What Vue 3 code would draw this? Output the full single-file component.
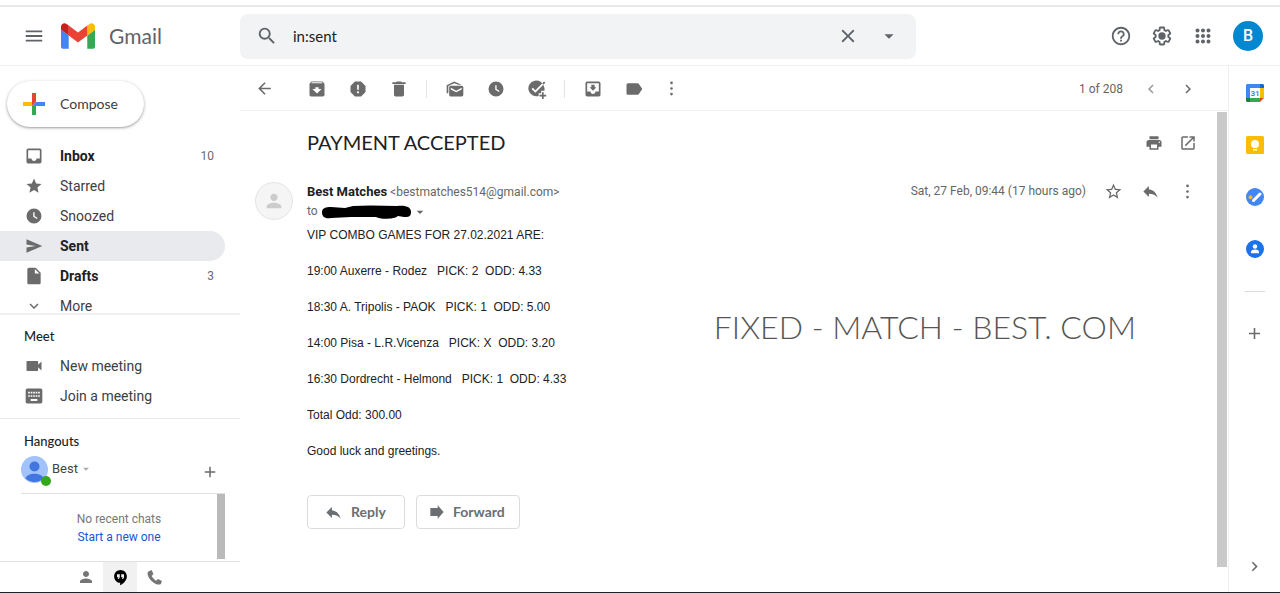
<script setup>
import { h, ref } from 'vue'

const paths = {
  menu: 'M3 18h18v-2H3v2zm0-5h18v-2H3v2zm0-7v2h18V6H3z',
  search: 'M15.5 14h-.79l-.28-.27A6.47 6.47 0 0 0 16 9.5 6.5 6.5 0 1 0 9.5 16c1.61 0 3.09-.59 4.23-1.57l.27.28v.79l5 4.99L20.49 19l-4.99-5zm-6 0C7.01 14 5 11.99 5 9.5S7.01 5 9.5 5 14 7.01 14 9.5 11.99 14 9.5 14z',
  close: 'M19 6.41L17.59 5 12 10.59 6.41 5 5 6.41 10.59 12 5 17.59 6.41 19 12 13.41 17.59 19 19 17.59 13.41 12z',
  caret: 'M7 10l5 5 5-5z',
  help: 'M11 18h2v-2h-2v2zm1-16C6.48 2 2 6.48 2 12s4.48 10 10 10 10-4.48 10-10S17.52 2 12 2zm0 18c-4.41 0-8-3.59-8-8s3.59-8 8-8 8 3.59 8 8-3.59 8-8 8zm0-14c-2.21 0-4 1.79-4 4h2c0-1.1.9-2 2-2s2 .9 2 2c0 2-3 1.75-3 5h2c0-2.25 3-2.5 3-5 0-2.21-1.79-4-4-4z',
  settings: 'M13.85 22.25h-3.7c-.74 0-1.36-.54-1.45-1.27l-.27-1.89c-.27-.14-.53-.29-.79-.46l-1.8.72c-.7.26-1.47-.03-1.81-.65L2.2 15.53c-.35-.66-.2-1.44.36-1.88l1.53-1.19c-.01-.15-.02-.3-.02-.46 0-.15.01-.31.02-.46l-1.52-1.19c-.59-.45-.74-1.26-.37-1.88l1.85-3.19c.34-.62 1.11-.9 1.79-.63l1.81.73c.26-.17.52-.32.78-.46l.27-1.91c.09-.7.71-1.25 1.44-1.25h3.7c.74 0 1.36.54 1.45 1.27l.27 1.89c.27.14.53.29.79.46l1.8-.72c.71-.26 1.48.03 1.82.65l1.84 3.18c.36.66.2 1.44-.36 1.88l-1.52 1.19c.01.15.02.3.02.46s-.01.31-.02.46l1.52 1.19c.56.45.72 1.23.37 1.86l-1.86 3.22c-.34.62-1.11.9-1.8.63l-1.8-.72c-.26.17-.52.32-.78.46l-.27 1.91c-.1.68-.72 1.22-1.46 1.22zm-3.23-2h2.76l.37-2.55.53-.22c.44-.18.88-.44 1.34-.78l.45-.34 2.38.96 1.38-2.4-2.03-1.58.07-.56c.03-.26.06-.51.06-.78s-.03-.53-.06-.78l-.07-.56 2.03-1.58-1.39-2.4-2.39.96-.45-.35c-.42-.32-.87-.58-1.33-.77l-.52-.22-.37-2.55h-2.76l-.37 2.55-.53.21c-.44.19-.88.44-1.34.79l-.45.33-2.38-.95-1.39 2.39 2.03 1.58-.07.56a7 7 0 0 0-.06.79c0 .26.02.53.06.78l.07.56-2.03 1.58 1.38 2.4 2.39-.96.45.35c.43.33.86.58 1.33.77l.53.22.38 2.55zM12 8a4 4 0 1 0 0 8 4 4 0 0 0 0-8z',
  apps: 'M6 3.8a2.2 2.2 0 1 0 0 4.4 2.2 2.2 0 0 0 0-4.4zm6 0a2.2 2.2 0 1 0 0 4.4 2.2 2.2 0 0 0 0-4.4zm6 0a2.2 2.2 0 1 0 0 4.4 2.2 2.2 0 0 0 0-4.4zM6 9.8a2.2 2.2 0 1 0 0 4.4 2.2 2.2 0 0 0 0-4.4zm6 0a2.2 2.2 0 1 0 0 4.4 2.2 2.2 0 0 0 0-4.4zm6 0a2.2 2.2 0 1 0 0 4.4 2.2 2.2 0 0 0 0-4.4zM6 15.8a2.2 2.2 0 1 0 0 4.4 2.2 2.2 0 0 0 0-4.4zm6 0a2.2 2.2 0 1 0 0 4.4 2.2 2.2 0 0 0 0-4.4zm6 0a2.2 2.2 0 1 0 0 4.4 2.2 2.2 0 0 0 0-4.4z',
  inbox: 'M19 3H5c-1.1 0-2 .9-2 2v14c0 1.1.9 2 2 2h14c1.1 0 2-.9 2-2V5c0-1.1-.9-2-2-2zm0 12h-4c0 1.66-1.35 3-3 3s-3-1.34-3-3H5V5h14v10z',
  star: 'M12 17.27L18.18 21l-1.64-7.03L22 9.24l-7.19-.61L12 2 9.19 8.63 2 9.24l5.46 4.73L5.82 21z',
  starOutline: 'M22 9.24l-7.19-.62L12 2 9.19 8.63 2 9.24l5.46 4.73L5.82 21 12 17.27 18.18 21l-1.63-7.03L22 9.24zM12 15.4l-3.76 2.27 1-4.28-3.32-2.88 4.38-.38L12 6.1l1.71 4.04 4.38.38-3.32 2.88 1 4.28L12 15.4z',
  clock: 'M12 2a10 10 0 1 0 0 20 10 10 0 0 0 0-20zm3.9 14L11 13V7h1.8v5l4 2.5-.9 1.5z',
  send: 'M2 21l21-9L2 3v7l12 2-12 2z',
  file: 'M6 2c-1.1 0-2 .9-2 2v16c0 1.1.9 2 2 2h12c1.1 0 2-.9 2-2V8l-6-6H6zm7 7V3.500L18.500 9H13z',
  down: 'M16.59 8.59L12 13.17 7.41 8.59 6 10l6 6 6-6z',
  left: 'M15.41 7.41L14 6l-6 6 6 6 1.41-1.41L10.83 12z',
  right: 'M10 6L8.590 7.410 13.170 12l-4.580 4.590L10 18l6-6z',
  video: 'M17 10.500V7c0-.55-.45-1-1-1H4c-.55 0-1 .45-1 1v10c0 .55.45 1 1 1h12c.55 0 1-.45 1-1v-3.500l4 4v-11l-4 4z',
  keyboard: 'M20 3H4a2 2 0 0 0-2 2v14c0 1.100.9 2 2 2h16a2 2 0 0 0 2-2V5a2 2 0 0 0-2-2zm-9 4h2v2h-2V7zm0 4h2v2h-2v-2zM8 7h2v2H8V7zm0 4h2v2H8v-2zm-1 2H5v-2h2v2zm0-4H5V7h2v2zm9 9H8v-2.500h8V18zm0-5h-2v-2h2v2zm0-4h-2V7h2v2zm3 4h-2v-2h2v2zm0-4h-2V7h2v2z',
  plus: 'M19 13h-6v6h-2v-6H5v-2h6V5h2v6h6v2z',
  back: 'M20 11H7.830l5.590-5.590L12 4l-8 8 8 8 1.410-1.410L7.830 13H20v-2z',
  archive: 'M20.540 5.230l-1.390-1.680C18.880 3.210 18.470 3 18 3H6c-.47 0-.88.21-1.160.55L3.460 5.230C3.170 5.570 3 6.020 3 6.500V19c0 1.100.9 2 2 2h14c1.100 0 2-.9 2-2V6.500c0-.48-.17-.93-.46-1.270zM12 17.500L6.500 12H10v-2h4v2h3.500L12 17.500zM5.120 5l.81-1h12l.94 1H5.120z',
  report: 'M15.730 3H8.270L3 8.270v7.460L8.270 21h7.460L21 15.730V8.270L15.730 3zM12 17.300c-.72 0-1.300-.58-1.300-1.300s.58-1.300 1.300-1.300 1.300.58 1.300 1.300-.58 1.300-1.300 1.300zm1-4.300h-2V7h2v6z',
  trash: 'M6 19c0 1.100.9 2 2 2h8c1.100 0 2-.9 2-2V7H6v12zM20 4h-4.500l-1-1h-5l-1 1H4v2h16V4z',
  unread: 'M20 8H7a2 2 0 0 0-2 2v9a2 2 0 0 0 2 2h13a2 2 0 0 0 2-2v-9a2 2 0 0 0-2-2zm0 4.500L13.500 16 7 12.500v-2l6.500 3.500 6.500-3.500v2zM2 17V7.500L11 3l9 4h-4l-5-2-7 3.500V17H2z',
  task: 'M20.500 9.500A9.500 9.500 0 1 0 14 20.300V17h3v-3h4v-3zM10 16.500l-4.500-4.500L7 10.500l3 3L20.500 3 22 4.500zM18 16h2v3h3v2h-3v3h-2v-3h-3v-2h3z',
  move: 'M19 3H5c-1.100 0-2 .9-2 2v14c0 1.100.9 2 2 2h14c1.100 0 2-.9 2-2V5c0-1.100-.9-2-2-2zm0 12h-4c0 1.660-1.350 3-3 3s-3-1.340-3-3H5V5h14v10zm-3-5h-2V7h-4v3H8l4 4 4-4z',
  label: 'M17.630 5.840C17.270 5.330 16.670 5 16 5L5 5.010C3.900 5.010 3 5.900 3 7v10c0 1.100.9 1.990 2 1.990L16 19c.67 0 1.270-.33 1.630-.84L22 12l-4.370-6.160z',
  more: 'M12 3.300a1.700 1.700 0 1 0 0 3.400 1.700 1.700 0 0 0 0-3.400zm0 7a1.700 1.700 0 1 0 0 3.400 1.700 1.700 0 0 0 0-3.400zm0 7a1.700 1.700 0 1 0 0 3.400 1.700 1.700 0 0 0 0-3.400z',
  print: 'M19 8H5c-1.660 0-3 1.340-3 3v6h4v4h12v-4h4v-6c0-1.660-1.340-3-3-3zm-3 11H8v-5h8v5zm3-7c-.55 0-1-.45-1-1s.45-1 1-1 1 .45 1 1-.45 1-1 1zm-1-9H6v4h12V3z',
  open: 'M19 19H5V5h7V3H5a2 2 0 0 0-2 2v14a2 2 0 0 0 2 2h14c1.100 0 2-.9 2-2v-7h-2v7zM14 3v2h3.590l-9.830 9.830 1.410 1.410L19 6.410V10h2V3h-7z',
  reply: 'M10 9V5l-7 7 7 7v-4.100c5 0 8.500 1.600 11 5.100-1-5-4-10-11-11z',
  forward: 'M2 6h11V2l9 10-9 10v-4H2z',
  person: 'M12 12c2.210 0 4-1.790 4-4s-1.790-4-4-4-4 1.790-4 4 1.790 4 4 4zm0 2c-2.670 0-8 1.340-8 4v2h16v-2c0-2.660-5.330-4-8-4z',
  hangouts: 'M12 1.500c-5 0-9 4-9 9s4 9 8.500 9V23c4.500-2.200 9.500-7 9.500-12.500 0-5-4-9-9-9zM11 11.500L9.700 14H8l1.300-2.500H7v-4h4v4zm6 0L15.700 14H14l1.300-2.500H13v-4h4v4z',
  phone: 'M8 1.500L3.500 3.500C1 5 2 11 7.500 16.500S19 23 21 21l1.500-4-5.500-3-3 2.500C12 15 9 12 8 10l2.500-3z',
}

const Icon = ({ name, size = 20 }) =>
  h('svg', { viewBox: '0 0 24 24', width: size, height: size, fill: 'currentColor', 'aria-hidden': 'true' }, [
    h('path', { d: paths[name], 'fill-rule': 'evenodd' }),
  ])
Icon.props = ['name', 'size']

const query = ref('in:sent')

const folders = [
  { label: 'Inbox', icon: 'inbox', count: 10, bold: true },
  { label: 'Starred', icon: 'star', size: 18 },
  { label: 'Snoozed', icon: 'clock', size: 18 },
  { label: 'Sent', icon: 'send', bold: true, active: true, size: 18 },
  { label: 'Drafts', icon: 'file', count: 3, bold: true },
  { label: 'More', icon: 'down', size: 18 },
]

const tools = [
  [
    { label: 'Archive', icon: 'archive' },
    { label: 'Report spam', icon: 'report' },
    { label: 'Delete', icon: 'trash' },
  ],
  [
    { label: 'Mark as unread', icon: 'unread' },
    { label: 'Snooze', icon: 'clock', size: 18 },
    { label: 'Add to tasks', icon: 'task' },
  ],
  [
    { label: 'Move to', icon: 'move' },
    { label: 'Labels', icon: 'label' },
  ],
]

const lines = [
  'VIP COMBO GAMES FOR 27.02.2021 ARE:',
  '19:00 Auxerre - Rodez   PICK: 2  ODD: 4.33',
  '18:30 A. Tripolis - PAOK   PICK: 1  ODD: 5.00',
  '14:00 Pisa - L.R.Vicenza   PICK: X  ODD: 3.20',
  '16:30 Dordrecht - Helmond   PICK: 1  ODD: 4.33',
  'Total Odd: 300.00',
  'Good luck and greetings.',
]
</script>

<template>
  <div class="app">
    <header class="top">
      <div class="brand">
        <button class="ib menu" aria-label="Main menu"><Icon name="menu" :size="22" /></button>
        <a class="logo" href="#">
          <svg viewBox="52 42 88 66" width="34" height="26" aria-hidden="true">
            <path fill="#4285f4" d="M58 108h14V74L52 59v43c0 3.320 2.690 6 6 6" />
            <path fill="#34a853" d="M120 108h14c3.320 0 6-2.690 6-6V59l-20 15" />
            <path fill="#fbbc04" d="M120 48v26l20-15v-8c0-7.420-8.470-11.650-14.400-7.200" />
            <path fill="#ea4335" d="M72 74V48l24 18 24-18v26L96 92" />
            <path fill="#c5221f" d="M52 51v8l20 15V48l-5.600-4.200c-5.940-4.450-14.400-.22-14.400 7.200" />
          </svg>
          <span>Gmail</span>
        </a>
      </div>
      <form class="search" role="search" @submit.prevent>
        <button class="ib" aria-label="Search"><Icon name="search" :size="22" /></button>
        <input v-model="query" type="text" aria-label="Search mail" />
        <button class="ib" type="button" aria-label="Clear search"><Icon name="close" :size="22" /></button>
        <button class="ib" type="button" aria-label="Search options"><Icon name="caret" :size="22" /></button>
      </form>
      <div class="account">
        <button class="ib" aria-label="Support"><Icon name="help" :size="22" /></button>
        <button class="ib" aria-label="Settings"><Icon name="settings" :size="22" /></button>
        <button class="ib" aria-label="Apps"><Icon name="apps" :size="22" /></button>
        <button class="avatar" aria-label="Account">B</button>
      </div>
    </header>

    <div class="columns">
      <aside class="side">
        <button class="compose">
          <svg viewBox="0 0 24 24" width="24" height="24" aria-hidden="true">
            <path fill="#ea4335" d="M10 1h4v9l-4 4z" />
            <path fill="#4285f4" d="M14 10h9v4H10z" />
            <path fill="#34a853" d="M10 14h4v9h-4z" />
            <path fill="#fbbc04" d="M1 10h9v4H1z" />
          </svg>
          Compose
        </button>
        <nav class="folders" aria-label="Folders">
          <a v-for="f in folders" :key="f.label" href="#" class="row" :class="{ bold: f.bold, active: f.active }">
            <span class="glyph"><Icon :name="f.icon" :size="f.size || 20" /></span>
            <span class="name">{{ f.label }}</span>
            <span v-if="f.count" class="count">{{ f.count }}</span>
          </a>
        </nav>
        <section class="meet">
          <h2>Meet</h2>
          <a href="#" class="row"><span class="glyph"><Icon name="video" :size="20" /></span><span class="name">New meeting</span></a>
          <a href="#" class="row"><span class="glyph"><Icon name="keyboard" :size="20" /></span><span class="name">Join a meeting</span></a>
        </section>
        <section class="hangouts">
          <h2>Hangouts</h2>
          <div class="me">
            <span class="face">
              <svg viewBox="0 0 27 27" width="27" height="27" aria-hidden="true">
                <circle cx="13.500" cy="13.500" r="13.500" fill="#a1c2fa" />
                <circle cx="13.500" cy="10.500" r="5" fill="#4175df" />
                <path d="M4.500 22.500c1-6.500 17-6.500 18 0a13.500 13.500 0 0 1-18 0z" fill="#4175df" />
              </svg>
              <i class="online"></i>
            </span>
            <button class="who">Best <Icon name="caret" :size="14" /></button>
            <button class="ib add" aria-label="New conversation"><Icon name="plus" :size="18" /></button>
          </div>
          <div class="chats">
            <p>No recent chats<br /><a href="#">Start a new one</a></p>
            <i class="thumb"></i>
          </div>
        </section>
        <div class="tabs">
          <button aria-label="Contacts"><Icon name="person" :size="18" /></button>
          <button class="on" aria-label="Hangouts"><Icon name="hangouts" :size="17" /></button>
          <button aria-label="Phone"><Icon name="phone" :size="17" /></button>
        </div>
      </aside>

      <main class="mail">
        <div class="toolbar">
          <button class="ib back" aria-label="Back to Sent"><Icon name="back" :size="19" /></button>
          <div v-for="(group, i) in tools" :key="i" class="group">
            <button v-for="t in group" :key="t.label" class="ib" :aria-label="t.label"><Icon :name="t.icon" :size="t.size || 20" /></button>
          </div>
          <button class="ib narrow" aria-label="More"><Icon name="more" :size="19" /></button>
          <span class="pos">1 of 208</span>
          <button class="ib slim faint" aria-label="Newer"><Icon name="left" :size="18" /></button>
          <button class="ib slim" aria-label="Older"><Icon name="right" :size="18" /></button>
        </div>

        <div class="viewport">
          <article>
            <div class="subject">
              <h1>PAYMENT ACCEPTED</h1>
              <button class="ib tight" aria-label="Print"><Icon name="print" :size="18" /></button>
              <button class="ib slim" aria-label="Open in new window"><Icon name="open" :size="18" /></button>
            </div>
            <div class="from">
              <span class="photo"><Icon name="person" :size="22" /></span>
              <div class="names">
                <p><strong>Best Matches</strong> <span>&lt;bestmatches514@gmail.com&gt;</span></p>
                <p class="to">
                  to
                  <svg class="ink" viewBox="0 0 91 14" width="91" height="14" aria-hidden="true">
                    <path d="M1 7C1 3 5 2 10 2l14 1 8-2 18-.500 26 .500c9-1 14 1 14 6 0 5-3 5-7 5l-6-1c-3 3-17 4-22 1L30 12l-20 1C4 14 1 12 1 7z" />
                  </svg>
                  <button class="details" aria-label="Show details"><Icon name="caret" :size="16" /></button>
                </p>
              </div>
              <div class="meta">
                <time>Sat, 27 Feb, 09:44 (17 hours ago)</time>
                <button class="ib slim" aria-label="Star"><Icon name="starOutline" :size="19" /></button>
                <button class="ib slim" aria-label="Reply"><Icon name="reply" :size="19" /></button>
                <button class="ib slim" aria-label="More"><Icon name="more" :size="19" /></button>
              </div>
            </div>
            <div class="content">
              <div class="text"><p v-for="l in lines" :key="l">{{ l }}</p></div>
              <div class="banner">FIXED - MATCH - BEST. COM</div>
            </div>
            <div class="actions">
              <button><Icon name="reply" :size="19" />Reply</button>
              <button><Icon name="forward" :size="16" />Forward</button>
            </div>
          </article>
          <div class="rail"><i></i></div>
        </div>
      </main>

      <aside class="addons">
        <button class="addon" aria-label="Calendar">
          <svg viewBox="0 0 18 18" width="18" height="18" aria-hidden="true">
            <path fill="#4285f4" d="M1 0h13v4H4v10H0V1z" />
            <path fill="#1967d2" d="M14 0h3l1 1v3h-4z" />
            <path fill="#fbbc04" d="M14 4h4v10h-4z" />
            <path fill="#34a853" d="M4 14h10v4H4z" />
            <path fill="#188038" d="M0 14h4v4H1l-1-1z" />
            <path fill="#ea4335" d="M14 14h4l-4 4z" />
            <path fill="#fff" d="M4 4h10v10H4z" />
            <text x="9" y="12" text-anchor="middle" font-size="8" font-weight="700" fill="#4285f4">31</text>
          </svg>
        </button>
        <button class="addon" aria-label="Keep">
          <svg viewBox="0 0 18 18" width="18" height="18" aria-hidden="true">
            <rect width="18" height="18" rx="1.500" fill="#fbbc04" />
            <circle cx="9" cy="8" r="4" fill="#fff" />
            <path d="M7 10h4v2H7zM7 13h4v1.500H7z" fill="#fff" />
          </svg>
        </button>
        <button class="addon" aria-label="Tasks">
          <svg viewBox="0 0 18 18" width="18" height="18" aria-hidden="true">
            <circle cx="9" cy="9" r="9" fill="#4285f4" />
            <path d="M7.500 12.500l6.500-6.500" stroke="#fff" stroke-width="3" stroke-linecap="round" />
            <circle cx="4.500" cy="9.200" r="2" fill="#fbbc04" />
          </svg>
        </button>
        <button class="addon" aria-label="Contacts">
          <svg viewBox="0 0 18 18" width="18" height="18" aria-hidden="true">
            <circle cx="9" cy="9" r="9" fill="#1a73e8" />
            <circle cx="9" cy="6.500" r="2.200" fill="#fff" />
            <path d="M5 13.200v-1.500c0-3 8-3 8 0v1.500z" fill="#fff" />
          </svg>
        </button>
        <hr />
        <button class="ib addon" aria-label="Get add-ons"><Icon name="plus" :size="19" /></button>
        <button class="ib hide" aria-label="Hide side panel"><Icon name="right" :size="19" /></button>
      </aside>
    </div>
  </div>
</template>

<style>
body {
  margin: 0;
  background: #fff;
}
</style>

<style scoped>
.app {
  box-sizing: border-box;
  display: flex;
  flex-direction: column;
  min-height: 100vh;
  padding-top: 5px;
  border-bottom: 1px solid #202124;
  font: 14px/18px Roboto, "Liberation Sans", sans-serif;
  color: #202124;
}
.app * {
  box-sizing: border-box;
}
button,
input {
  margin: 0;
  padding: 0;
  border: 0;
  background: none;
  font: inherit;
  color: inherit;
}
a {
  color: inherit;
  text-decoration: none;
}
svg {
  display: block;
  flex: none;
}
h1,
h2,
p {
  margin: 0;
}
.ib {
  display: flex;
  flex: none;
  align-items: center;
  justify-content: center;
  width: 41px;
  height: 32px;
  color: #6b6b6b;
}
.slim {
  width: 37px;
}
.tight {
  width: 31px;
}
.narrow {
  width: 35px;
}
.faint {
  color: #999;
}

.top {
  display: flex;
  align-items: center;
  height: 61px;
  border-top: 2px solid #e8e8e8;
  border-bottom: 1px solid #f0f1f2;
}
.brand {
  display: flex;
  flex: none;
  align-items: center;
  width: 240px;
  padding-left: 13px;
}
.top .ib {
  color: #5f6368;
}
.logo {
  display: flex;
  align-items: center;
  gap: 14px;
  margin-left: 7px;
  font: 21px/28px Lato, sans-serif;
  color: #5f6368;
}
.search {
  display: flex;
  flex: 0 1 676px;
  align-items: center;
  height: 45px;
  padding: 0 7px 0 6px;
  border-radius: 8px;
  background: #f1f3f4;
}
.search input {
  flex: 1;
  min-width: 0;
  padding-left: 6px;
  font: 15px/20px Lato, sans-serif;
  color: #202124;
  outline: 0;
}
.account {
  display: flex;
  align-items: center;
  margin-left: auto;
  padding-right: 17px;
}
.avatar {
  width: 30px;
  height: 30px;
  margin-left: 10px;
  border-radius: 50%;
  background: #0288d1;
  font-weight: 500;
  font-size: 16px;
  color: #fff;
}

.columns {
  display: flex;
  flex: 1;
}
.side {
  display: flex;
  flex: none;
  flex-direction: column;
  width: 240px;
}
.compose {
  display: flex;
  align-items: center;
  gap: 14px;
  align-self: flex-start;
  height: 46px;
  margin: 15px 0 14px 7px;
  padding: 0 26px 0 15px;
  border-radius: 23px;
  box-shadow: 0 1px 2px rgba(60, 64, 67, 0.35), 0 1px 3px 1px rgba(60, 64, 67, 0.14);
  font: 14px/20px Lato, sans-serif;
  color: #3c4043;
}
.folders {
  height: 172px;
  overflow: hidden;
}
.row {
  display: flex;
  align-items: center;
  height: 30px;
  margin-right: 15px;
  padding-right: 11px;
  border-radius: 0 15px 15px 0;
  color: #3c4043;
}
.glyph {
  display: flex;
  flex: none;
  justify-content: center;
  width: 20px;
  margin: 0 16px 0 24px;
  color: #6b6b6b;
}
.name {
  flex: 1;
}
.count {
  font-size: 12px;
  color: #6b6b6b;
}
.bold .name {
  font-weight: 700;
  color: #202124;
}
.active {
  background: #e8eaed;
}
h2 {
  padding-left: 24px;
  font: 500 13px/20px Lato, sans-serif;
  color: #202124;
}
.meet {
  padding: 11px 0 7px;
  border-top: 2px solid #edeff0;
  border-bottom: 1px solid #e6e8ea;
}
.meet h2 {
  padding-bottom: 5px;
}
.hangouts {
  padding-top: 12px;
}
.me {
  display: flex;
  align-items: center;
  height: 43px;
  margin: 0 15px 0 21px;
  border-bottom: 1px solid #e0e0e0;
}
.face {
  position: relative;
  margin-top: -5px;
}
.online {
  position: absolute;
  right: -3px;
  bottom: -3px;
  width: 10px;
  height: 10px;
  border-radius: 50%;
  background: #34a81c;
}
.who {
  display: flex;
  align-items: center;
  margin: -6px auto 0 4px;
  font-size: 13px;
  color: #444;
}
.who svg {
  margin-left: 1px;
  color: #aaa;
}
.add {
  width: 30px;
}
.chats {
  display: flex;
  align-items: flex-start;
  height: 67px;
  margin: 0 15px 0 21px;
  font-size: 12px;
  color: #777;
}
.chats p {
  flex: 1;
  padding-top: 16px;
  text-align: center;
}
.chats a {
  color: #1558d6;
}
.thumb {
  width: 8px;
  height: 65px;
  background: #bababa;
}
.tabs {
  display: flex;
  flex: 1;
  justify-content: center;
  min-height: 30px;
  border-top: 1px solid #e0e0e0;
}
.tabs button {
  display: flex;
  align-items: center;
  justify-content: center;
  width: 34px;
  color: #757575;
}
.tabs .on {
  background: #f1f1f1;
  color: #000;
}

.mail {
  display: flex;
  flex: 1;
  flex-direction: column;
  min-width: 0;
}
.toolbar {
  display: flex;
  align-items: center;
  height: 45px;
  padding: 1px 22px 0 4px;
  border-bottom: 1px solid #eeeff0;
}
.back {
  margin-right: 11px;
}
.group {
  display: flex;
  align-items: center;
}
.group + .group::before {
  width: 1px;
  height: 18px;
  margin: 0 7px;
  background: #e4e4e4;
  content: "";
}
.pos {
  margin-left: auto;
  padding-right: 9px;
  font-size: 12px;
  color: #666;
}
.viewport {
  display: flex;
  flex: 1;
}
article {
  flex: 1;
  min-width: 0;
  padding: 16px 11px 24px 67px;
}
.subject {
  display: flex;
  align-items: center;
}
h1 {
  flex: 1;
  padding-bottom: 2px;
  font: 20px/28px Lato, sans-serif;
  color: #202124;
}
.from {
  display: flex;
  align-items: flex-start;
  padding-top: 22px;
  color: #666;
}
.photo {
  display: flex;
  flex: none;
  align-items: center;
  justify-content: center;
  width: 38px;
  height: 38px;
  margin: 1px 14px 0 -52px;
  border: 1px solid #e4e4e4;
  border-radius: 50%;
  background: #f5f5f5;
  color: #ccc;
}
.names {
  flex: 1;
  padding-top: 1px;
  font-size: 12px;
  line-height: 19px;
}
.names strong {
  font-size: 13px;
  color: #202124;
}
.to {
  display: flex;
  align-items: center;
}
.ink {
  margin-left: 3px;
}
.meta {
  display: flex;
  align-items: center;
  height: 20px;
}
.meta time {
  padding-right: 9px;
  font-size: 12px;
}
.content {
  display: flex;
  justify-content: space-between;
  padding-top: 5px;
}
.text {
  font: 12px/18px "Liberation Sans", Arial, sans-serif;
  color: #222;
}
.text p {
  white-space: pre-wrap;
}
.text p + p {
  margin-top: 18px;
}
.banner {
  align-self: center;
  padding: 0 70px 32px 20px;
  font: 300 32px/40px Lato, sans-serif;
  color: #555;
}
.actions {
  display: flex;
  gap: 11px;
  padding-top: 35px;
}
.actions button {
  display: flex;
  align-items: center;
  justify-content: center;
  gap: 8px;
  min-width: 98px;
  height: 34px;
  padding: 0 14px 0 12px;
  border: 1px solid #dadce0;
  border-radius: 4px;
  font: 700 14px/20px Lato, sans-serif;
  color: #6b6e72;
}
.rail {
  width: 11px;
  padding: 1px 1px 25px 0;
}
.rail i {
  display: block;
  height: 100%;
  background: #c9c9c9;
}

.addons {
  display: flex;
  flex: none;
  flex-direction: column;
  align-items: center;
  width: 52px;
  padding: 11px 0 10px;
  border-left: 1px solid #eeeff0;
}
.addon {
  display: flex;
  align-items: center;
  justify-content: center;
  width: 36px;
  height: 32px;
  margin-bottom: 20px;
  font-family: Roboto, sans-serif;
}
hr {
  width: 20px;
  height: 1px;
  margin: 6px 0 25px;
  border: 0;
  background: #dadce0;
}
.hide {
  margin-top: auto;
}
</style>
